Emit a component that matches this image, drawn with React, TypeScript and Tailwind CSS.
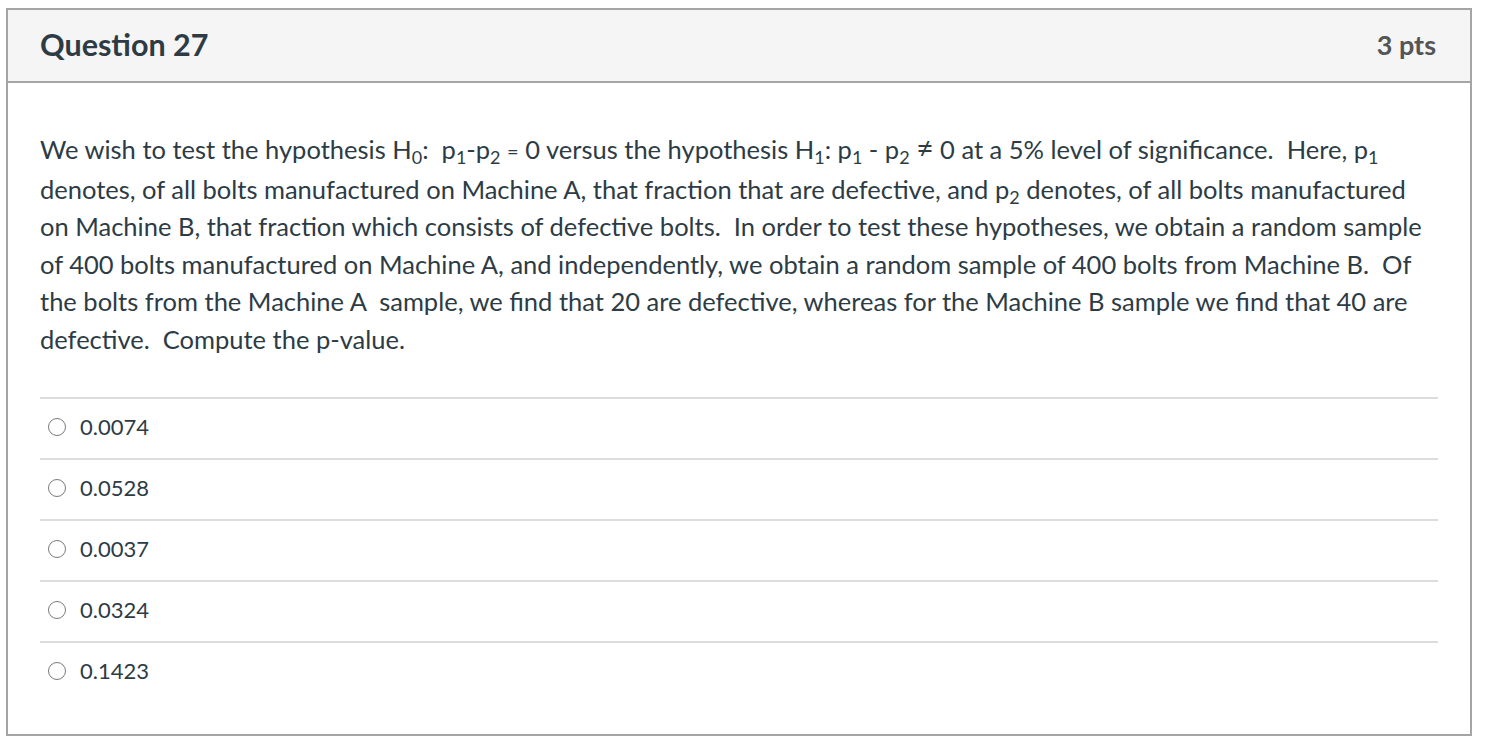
const ANSWERS = ['0.0074', '0.0528', '0.0037', '0.0324', '0.1423'];

function Sub({ children }: { children: React.ReactNode }) {
  return <span className="text-[18px] leading-none relative top-[5px]">{children}</span>;
}

export default function App() {
  return (
    <div className="w-[1486px] h-[746px] bg-white pt-2 pl-[6px] font-['Lato',sans-serif] text-[#2d3b45]">
      <div className="w-[1466px] h-[728px] border-2 border-[#a5a5a5] flex flex-col">
        {/* Header */}
        <div className="h-[73px] bg-[#f5f5f5] border-b-2 border-[#a5a5a5] flex items-center justify-between pl-[32px] pr-[34px] pb-[1px]">
          <h2 className="text-[30.5px] font-bold text-[#2d3b45]">Question 27</h2>
          <span className="text-[27px] font-bold text-[#555555]">3 pts</span>
        </div>

        {/* Body */}
        <div className="flex-1 pt-[48px] pl-[32px] pr-[32px]">
          <p className="text-[25.5px] leading-[37.6px]">
            We wish to test the hypothesis H<Sub>0</Sub>:&nbsp; p<Sub>1</Sub>-p<Sub>2</Sub>
            {' '}<span className="text-[20px]">=</span> 0 versus the hypothesis H<Sub>1</Sub>: p<Sub>1</Sub>
            {' '}- p<Sub>2</Sub> <span className="text-[30px] leading-none">≠</span> 0 at a 5% level of
            significance.&nbsp; Here, p<Sub>1</Sub> denotes, of all bolts manufactured on Machine A, that
            fraction that are defective, and p<Sub>2</Sub> denotes, of all bolts manufactured on Machine B,
            that fraction which consists of defective bolts.&nbsp; In order to test these hypotheses, we
            obtain a random sample of 400 bolts manufactured on Machine A, and independently, we obtain a
            random sample of 400 bolts from Machine B.&nbsp; Of the bolts from the Machine A&nbsp; sample, we
            find that 20 are defective, whereas for the Machine B sample we find that 40 are defective.&nbsp;
            Compute the p-value.
          </p>

          <div className="mt-[38px]">
            {ANSWERS.map((a) => (
              <div
                key={a}
                className="h-[61px] border-t-2 border-[#dcdcdc] flex items-center pl-[8px] pb-[3px]"
              >
                <span className="w-[18px] h-[18px] rounded-full border-[1.5px] border-[#7a7a7a] bg-white shrink-0" />
                <span className="ml-[14px] text-[22px] text-[#2d3b45]">{a}</span>
              </div>
            ))}
          </div>
        </div>
      </div>
    </div>
  );
}
